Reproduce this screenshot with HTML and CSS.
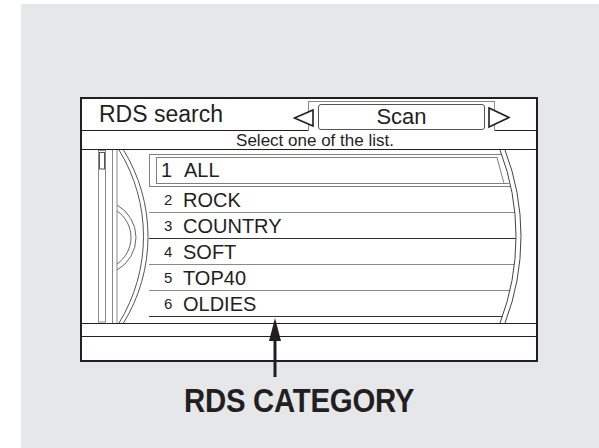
FILE: index.html
```html
<!DOCTYPE html>
<html>
  <head>
    <title>RDS search</title>
    <meta name="viewport" content="width=device-width, initial-scale=1.0">
    <link rel="stylesheet" href="styles.css">
  </head>
  <body>
    <div class="page">
      <div class="screen">
        <div class="head">
          <div class="title">RDS search</div>
          <div class="nav">
            <svg class="tri" width="21" height="31"><polygon points="1.5,19 20,11 20,27"/></svg>
            <div class="tab"><div class="tab-box">Scan</div></div>
            <svg class="tri" width="23" height="31"><polygon points="1,9 21,18.5 1,28"/></svg>
          </div>
        </div>
        <div class="hint">Select one of the list.</div>
        <div class="list">
          <div class="rows">
            <div class="row sel">
              <div class="sel-box"><span class="num">1</span>ALL</div>
            </div>
            <div class="row"><span class="num">2</span>ROCK</div>
            <div class="row dark"><span class="num">3</span>COUNTRY</div>
            <div class="row"><span class="num">4</span>SOFT</div>
            <div class="row"><span class="num">5</span>TOP40</div>
            <div class="row dark"><span class="num">6</span>OLDIES</div>
          </div>
          <!-- scroll bar, dial arcs and right edge mask -->
          <svg class="deco" width="454" height="173" viewBox="82 150 454 173">
            <rect x="98.5" y="150.5" width="7" height="171.5" fill="#fff" stroke="#8a8a8a"/>
            <rect x="99.5" y="152.5" width="5" height="16.5" fill="#fff" stroke="#555"/>
            <line x1="112.5" y1="150" x2="112.5" y2="323" stroke="#8a8a8a"/>
            <line x1="117" y1="150" x2="117" y2="323" stroke="#8a8a8a"/>
            <path d="M119,150 A164.9,164.9 0 0 1 119,323" fill="none" stroke="#555"/>
            <path d="M123.5,150 A164.9,164.9 0 0 1 123.5,323" fill="none" stroke="#555"/>
            <path d="M117,205 A37.3,37.3 0 0 1 117,270" fill="none" stroke="#666"/>
            <path d="M117,211 A32.1,32.1 0 0 1 117,264" fill="none" stroke="#666"/>
            <polygon points="497,156 506,156 506,183" fill="#fff"/>
            <line x1="497" y1="157.5" x2="504" y2="183.5" stroke="#808080"/>
            <path d="M500,150 A241.8,241.8 0 0 1 500,323 L536,323 L536,150 Z" fill="#fff"/>
            <path d="M500,150 A241.8,241.8 0 0 1 500,323" fill="none" stroke="#444"/>
            <path d="M505,150 A241.8,241.8 0 0 1 505,323" fill="none" stroke="#444"/>
          </svg>
        </div>
        <div class="strip"></div>
        <div class="strip low"></div>
      </div>
      <div class="label">RDS CATEGORY</div>
      <svg class="pointer" width="14" height="65">
        <polygon points="7,1 1,24 13,24" fill="#231f20"/>
        <rect x="5.5" y="20" width="3" height="40" fill="#231f20"/>
      </svg>
    </div>
  </body>
</html>
```

FILE: styles.css
```css
body {
  margin: 0;
  background-color: #fff;
  font-family: "Liberation Sans", Arial, Helvetica, sans-serif;
  color: #231f20;
}

.page {
  position: relative;
  margin: 4px 0 0 21px;
  height: 444px;
  padding: 93px 0 0 59px;
  box-sizing: border-box;
  background-color: #e6e7e8;
  overflow: hidden;
}

.screen {
  width: 458px;
  box-sizing: border-box;
  border: 2px solid #231f20;
  background-color: #fff;
}

.head {
  display: flex;
  height: 31px;
  padding: 0 25px 0 17px;
  border-bottom: 1px solid #231f20;
}

.title {
  margin-top: 3px;
  font-size: 23px;
  line-height: 24px;
}

.nav {
  display: flex;
  margin-left: auto;
  height: 31px;
}

.tri {
  position: relative;
  z-index: 1;
  flex: none;
}

.tri polygon {
  fill: #fff;
  stroke: #231f20;
  stroke-width: 1.6;
  stroke-linejoin: miter;
}

.nav .tab + .tri {
  margin-left: -7px;
}

.tab {
  flex: none;
  width: 187px;
  height: 30px;
  margin: 2px 0 0 -6px;
  padding: 2px 9px 0;
  box-sizing: border-box;
  border: 1px solid #8a8a8a;
  border-bottom: none;
  background-color: #fff;
}

.tab-box {
  height: 26px;
  box-sizing: border-box;
  border: 1px solid #555;
  border-radius: 3px;
  font-size: 22px;
  line-height: 24px;
  text-align: center;
}

.hint {
  height: 17px;
  padding: 1px 0 0 12px;
  border-bottom: 1px solid #231f20;
  font-size: 17px;
  line-height: 17px;
  text-align: center;
}

.list {
  position: relative;
  height: 173px;
  border-bottom: 1px solid #231f20;
  overflow: hidden;
}

.rows {
  padding: 4px 0 0 67px;
}

.row {
  height: 24px;
  padding: 1px 0 0 15px;
  border-bottom: 1px solid #8a8a8a;
  font-size: 20px;
  line-height: 24px;
}

.row.dark {
  border-bottom-color: #333;
}

.num {
  display: inline-block;
  width: 19px;
  font-size: 15px;
  vertical-align: 2px;
}

.row.sel {
  height: auto;
  padding: 2px 0 2px 6px;
  border: 1px solid #808080;
}

.sel-box {
  width: 348px;
  height: 25px;
  padding-left: 4px;
  border: 1px solid #808080;
  border-right: none;
  line-height: 25px;
}

.sel-box .num {
  width: 23px;
  font-size: 20px;
  vertical-align: baseline;
}

.deco {
  position: absolute;
  top: 0;
  left: 0;
  pointer-events: none;
}

.strip {
  height: 12px;
  border-bottom: 1px solid #231f20;
}

.strip.low {
  height: 23px;
  border-bottom: none;
}

.label {
  display: inline-block;
  margin: 22px 0 0 104px;
  font-weight: bold;
  font-size: 33px;
  line-height: 34px;
  letter-spacing: -0.3px;
  transform: scaleX(0.89);
  transform-origin: left top;
}

.pointer {
  position: absolute;
  left: 247px;
  top: 313px;
}
```
